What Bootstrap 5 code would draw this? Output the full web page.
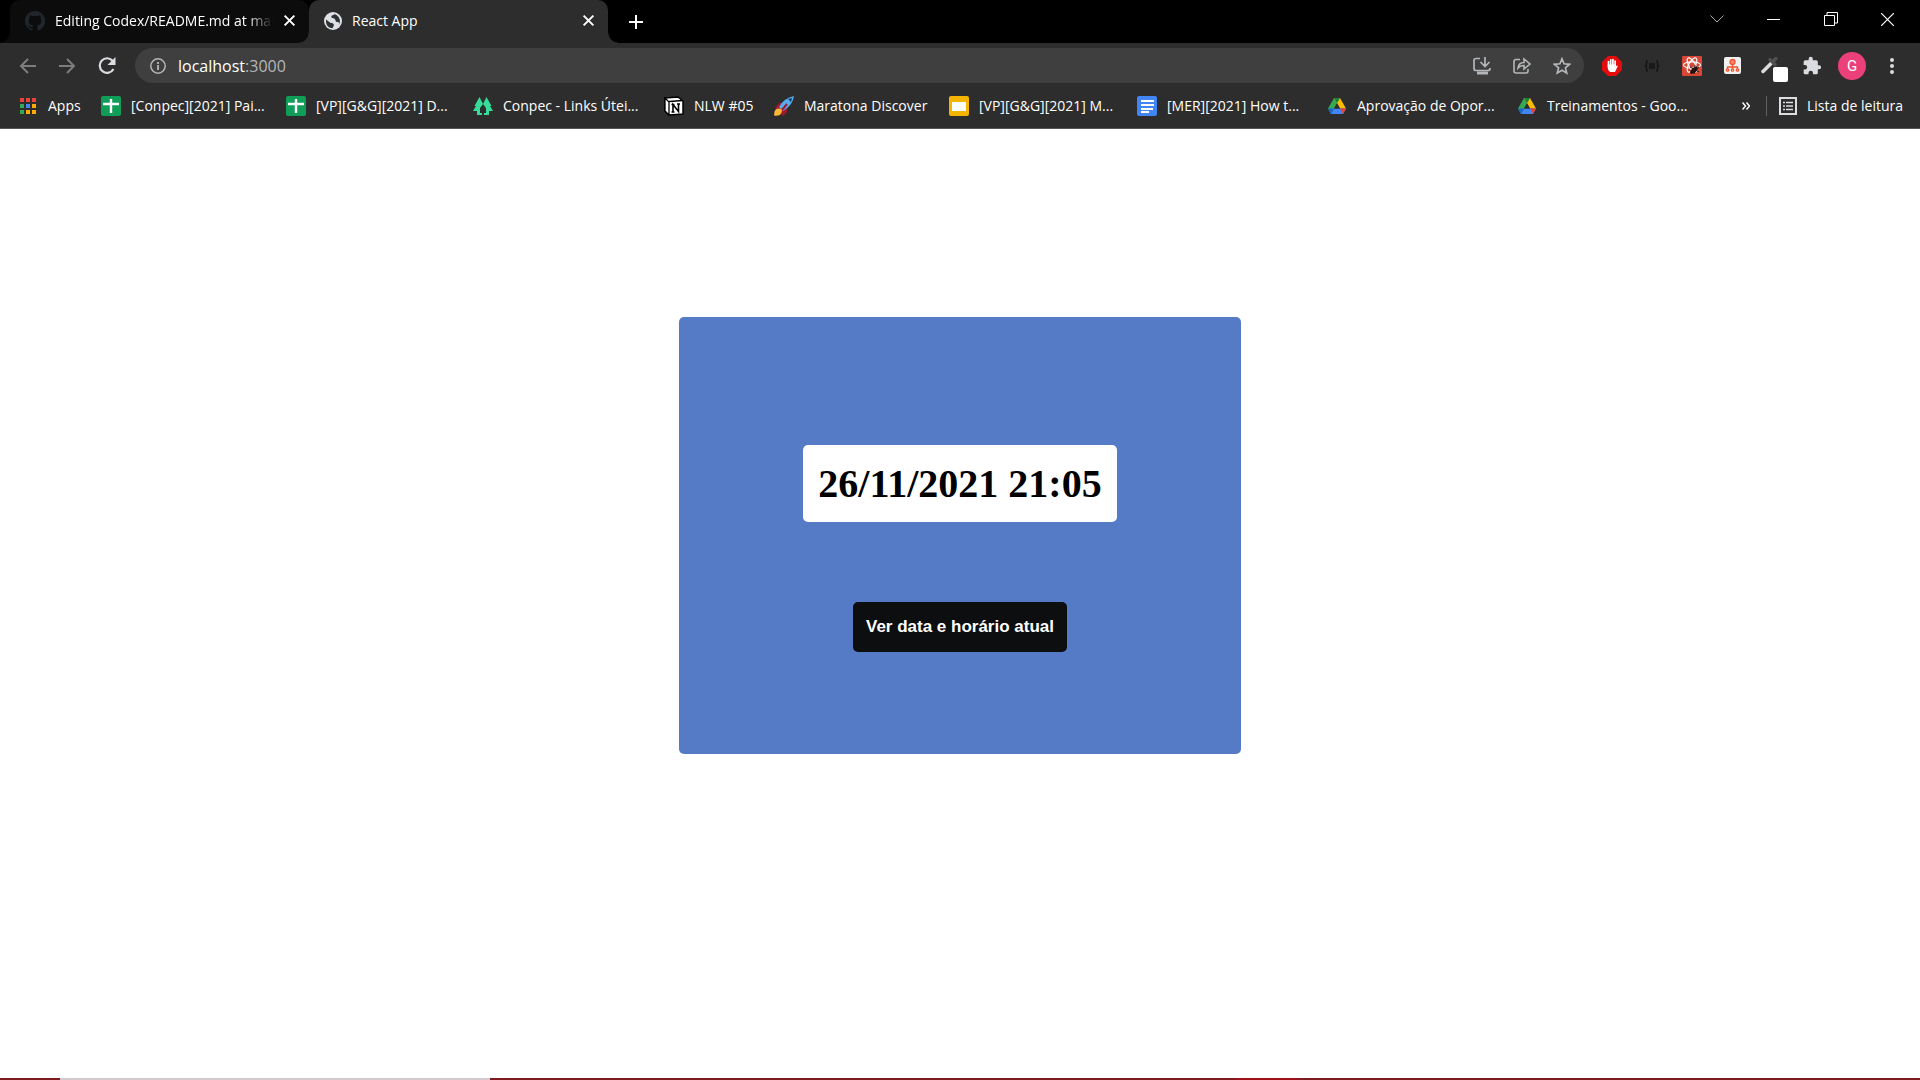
<!DOCTYPE html>
<html lang="pt-BR">
<head>
<meta charset="utf-8">
<meta name="viewport" content="width=device-width, initial-scale=1">
<title>React App</title>
<link href="https://cdn.jsdelivr.net/npm/bootstrap@5.3.0/dist/css/bootstrap.min.css" rel="stylesheet">
<style>
body{font-family:"Open Sans","Noto Sans",sans-serif;font-size:15px;line-height:20px;color:#fff;background:#fff}
button{color:inherit}
svg{display:block;flex:none}
.tabstrip{background:#000;height:43px;padding-left:10px}
.browser-tab{width:299px;height:43px;padding:0 13px 2px 15px;gap:10px;border-radius:10px 10px 0 0;position:relative}
.browser-tab.idle{background:#0c0c0c;border-radius:10px 10px 10px 0}
.browser-tab.current{background:#2d2d2d}
.browser-tab::before,.browser-tab.current::after{content:"";position:absolute;bottom:0;width:10px;height:10px}
.browser-tab::before{left:-10px}
.browser-tab.idle::before{background:radial-gradient(circle at 0 0,#000 9px,#0c0c0c 10px)}
.browser-tab.current::before{background:radial-gradient(circle at 0 0,#0c0c0c 9px,#2d2d2d 10px)}
.browser-tab.current::after{right:-10px;background:radial-gradient(circle at 100% 0,#000 9px,#2d2d2d 10px)}
.tab-title{font-size:14px;overflow:hidden;white-space:nowrap}
.fading{-webkit-mask-image:linear-gradient(90deg,#000 88%,transparent);mask-image:linear-gradient(90deg,#000 88%,transparent)}
.bare{background:none;border:0;padding:0;display:flex;align-items:center;justify-content:center;flex:none}
.win{width:57px;height:38px}
.toolbar-row{background:#2d2d2d;height:45px;padding:0 8px 0 7px}
.nav-ico{width:40px;height:36px;color:#dadce0}
.nav-ico:disabled{color:#7d7d7d}
.omnibox{background:#3f3f3f;border-radius:18px;height:35px;margin-left:8px;padding:0 2px 0 15px;color:#b4b7ba}
.addr{position:relative;font-size:16px;line-height:24px}
.addr input{position:absolute;inset:0;width:100%;border:0;background:none;color:transparent;padding:0}
.addr b{font-weight:400;color:#fff}
.ext{width:40px;height:36px}
.avatar{width:28px;height:28px;border-radius:50%;background:#ec407a;font:15px/28px Roboto,sans-serif}
.bookmark-row{background:#2d2d2d;height:41px;border-bottom:1px solid #555;padding:0 17px 4px 18px;font-size:14px}
.bookmark-row .vr{height:20px;align-self:center}
.marks{display:grid;grid-template-columns:83px 185px 187px 191px 110px 175px 188px 190px 190px auto}
.marks a,.reading{color:#fff;text-decoration:none;display:flex;align-items:center;gap:10px;white-space:nowrap}
.panel-blue{width:562px;height:437px;margin-top:188px;background:#557ac6;border-radius:5px;padding-top:128px}
.stamp{background:#fff;color:#000;border-radius:5px;font:bold 40px/45px "Liberation Serif",serif;padding:16px 15px;margin:0}
.now-btn{background:#0c0e10;color:#fff;border:0;border-radius:5px;margin-top:80px;padding:13px;font:bold 17px/24px "Liberation Sans",sans-serif}
.edge-strip{height:2px;background:linear-gradient(90deg,transparent 1236px,#a01018 1236px,#a01018 1297px,transparent 1297px),linear-gradient(90deg,#7c1c20 60px,#d2cace 60px,#d2cace 490px,#7c1c20 490px)}
</style>
<script src="https://cdn.jsdelivr.net/npm/bootstrap@5.3.0/dist/js/bootstrap.bundle.min.js"></script>
</head>
<body class="min-vh-100 d-flex flex-column">
<svg width="0" height="0" class="position-absolute" aria-hidden="true">
  <symbol id="x" viewBox="0 0 12 12"><path d="M1.500 1.500l9 9m0-9l-9 9" stroke="currentColor" stroke-width="1.800" fill="none"/></symbol>
  <symbol id="sheet" viewBox="0 0 20 20"><rect width="20" height="20" rx="2" fill="#0f9d58"/><path d="M10 3v14M2 8h16" stroke="#fff" stroke-width="2.400"/></symbol>
  <symbol id="drive" viewBox="0 0 20 20"><path d="M7 2h6L10 7.500 4 18 1 12.500z" fill="#34a853"/><path d="M7 2h6l6 10.500h-6z" fill="#fbbc04"/><path d="M7 2L10 7.300 13 2z" fill="#188038"/><path d="M7 12.500h12L16 18H4z" fill="#4285f4"/><path d="M1 12.500h6L4 18z" fill="#1967d2"/><path d="M13 12.500h6L16 18z" fill="#ea4335"/><path d="M10 7.300l3 5.200H7z" fill="#2d2d2d"/></symbol>
</svg>
<header>
  <div class="tabstrip d-flex align-items-center">
    <div class="browser-tab idle d-flex align-items-center">
      <svg width="20" height="20" viewBox="0 0 16 16" fill="#20262c"><path d="M8 0C3.580 0 0 3.580 0 8c0 3.540 2.290 6.530 5.470 7.590.4.070.55-.17.55-.38v-1.340c-2.230.48-2.700-1.070-2.700-1.070-.36-.93-.89-1.170-.89-1.170-.73-.5.05-.49.05-.49.81.06 1.230.83 1.230.83.72 1.230 1.880.87 2.340.67.07-.52.28-.87.51-1.070-1.780-.2-3.640-.89-3.640-3.950 0-.87.31-1.590.82-2.150-.08-.2-.36-1.020.08-2.120 0 0 .67-.21 2.200.82a7.600 7.600 0 0 1 4 0c1.530-1.040 2.200-.82 2.200-.82.44 1.100.16 1.920.08 2.120.51.56.82 1.270.82 2.150 0 3.070-1.870 3.750-3.650 3.950.29.25.54.73.54 1.480v2.190c0 .21.15.46.55.38A8 8 0 0 0 8 0z"/></svg>
      <span class="tab-title fading flex-grow-1">Editing Codex/README.md at main</span>
      <button class="bare" aria-label="Fechar guia"><svg width="13" height="13"><use href="#x"/></svg></button>
    </div>
    <div class="browser-tab current d-flex align-items-center">
      <svg width="18" height="18" viewBox="0 0 18 18"><circle cx="9" cy="9" r="9" fill="#dee1e6"/><path d="M2 7.500l4 3c1 .8 2.500.2 3.500 1.500S9.500 14 8.500 16.200C4 16 1.600 12.500 2 7.500zM10.500 2c-.2 1.500-3.500.8-3.200 2.800S10 6 11 7.300s.2 2.500 2.200 2.700 2.500 1 1.500 3.200C17 10 16.500 4.500 10.500 2z" fill="#303134"/></svg>
      <span class="tab-title flex-grow-1">React App</span>
      <button class="bare" aria-label="Fechar guia"><svg width="13" height="13"><use href="#x"/></svg></button>
    </div>
    <button class="bare ms-3 ps-1" aria-label="Nova guia"><svg width="16" height="16"><path d="M8 1v14M1 8h14" stroke="#fff" stroke-width="2"/></svg></button>
    <div class="ms-auto me-1 pe-0 d-flex align-self-start">
      <button class="bare win" aria-label="Pesquisar guias"><svg width="14" height="8"><path d="M.5.5L7 7 13.500.5" stroke="#aaa" fill="none"/></svg></button>
      <button class="bare win" aria-label="Minimizar"><svg width="13" height="13"><path d="M0 6.500h13" stroke="#fff"/></svg></button>
      <button class="bare win" aria-label="Restaurar"><svg width="14" height="14"><path d="M.5 3.500h10v10H.5zM3 3V.5h10.500V11H11" stroke="#fff" fill="none"/></svg></button>
      <button class="bare win" aria-label="Fechar"><svg width="13" height="13"><path d="M0 0l13 13M13 0L0 13" stroke="#fff" stroke-width="1.200"/></svg></button>
    </div>
  </div>
  <div class="toolbar-row d-flex align-items-center">
    <button class="bare nav-ico" disabled aria-label="Voltar"><svg width="17" height="16" fill="none" stroke="currentColor" stroke-width="2"><path d="M17 8H2M9 1L2 8l7 7"/></svg></button>
    <button class="bare nav-ico" disabled aria-label="Avançar"><svg width="17" height="16" fill="none" stroke="currentColor" stroke-width="2"><path d="M0 8h15M8 1l7 7-7 7"/></svg></button>
    <button class="bare nav-ico" aria-label="Recarregar"><svg width="18" height="18" fill="none"><path d="M14.800 4A7.300 7.300 0 1 0 15.500 12" stroke="currentColor" stroke-width="2.200"/><path d="M17.500 0v8h-8z" fill="currentColor"/></svg></button>
    <div class="omnibox d-flex align-items-center flex-grow-1">
      <svg width="16" height="16" fill="none" stroke="currentColor"><circle cx="8" cy="8" r="7.200" stroke-width="1.500"/><path d="M8 7v5M8 4v2" stroke-width="1.800"/></svg>
      <div class="addr flex-grow-1 ms-2 ps-1"><b>localhost</b>:3000<input type="text" aria-label="Endereço"></div>
      <button class="bare ext text-reset" aria-label="Instalar"><svg width="18" height="18" fill="none" stroke="currentColor" stroke-width="1.700"><path d="M7 1.500H3Q1 1.500 1 3.500v8q0 2 2 2h12q2 0 2-2V11M12 0v9M7.500 5L12 9.500 16.500 5"/><path d="M4 16h11" stroke-width="3"/></svg></button>
      <button class="bare ext text-reset" aria-label="Compartilhar"><svg width="18" height="18" fill="none" stroke="currentColor" stroke-width="1.600"><path d="M7 2.500H3q-2 0-2 2V14q0 2 2 2h10q2 0 2-2v-2M5 11c.5-4 2.500-5.500 6-5.500V2l6 5-6 5V8.500C8 8.500 6.500 9.200 5 11z"/></svg></button>
      <button class="bare ext text-reset" aria-label="Favoritar"><svg width="18" height="18" viewBox="0 0 18 18" fill="none" stroke="currentColor" stroke-width="1.700"><path d="M9 1.800l2.100 5 5.400.5-4.100 3.500 1.300 5.300L9 13.300l-4.700 2.800 1.300-5.300-4.100-3.500 5.400-.5z"/></svg></button>
    </div>
    <div class="d-flex align-items-center ms-2">
      <button class="bare ext" aria-label="Bloqueador de anúncios"><svg width="20" height="20" viewBox="0 0 20 20"><path d="M6 0h8l6 6v8l-6 6H6l-6-6V6z" fill="#e40d0d"/><path d="M6.500 10V5.500M8.700 9V3.800M10.900 9V3.500M13.100 10V5" stroke="#fff" stroke-width="1.700" stroke-linecap="round"/><path d="M5.700 8.500h8.200v2l1-1q1-.3.800.8L13 16H8Q5.700 14 5.700 12z" fill="#fff"/></svg></button>
      <button class="bare ext" aria-label="JSON"><svg width="16" height="12" viewBox="0 0 16 12" fill="none" stroke="#151515" stroke-width="1.500"><path d="M4 1Q2 1 2.500 3.500T.5 6q2.500 0 2 2.500T4 11M12 1q2 0 1.500 2.500t2 2.500q-2.500 0-2 2.500T12 11M5 4h6M5 6h6M5 8h6"/></svg></button>
      <button class="bare ext" aria-label="React"><svg width="20" height="20" viewBox="0 0 20 20"><rect width="20" height="20" rx="1" fill="#d84635"/><g fill="none" stroke="#fff" stroke-width="1.200"><ellipse cx="10" cy="9" rx="8.500" ry="3.200"/><ellipse cx="10" cy="9" rx="8" ry="3.200" transform="rotate(60 10 9)"/><ellipse cx="10" cy="9" rx="8" ry="3.200" transform="rotate(120 10 9)"/></g><path d="M8 15l3-3 4-2 1 3-3 4-4 1z" fill="#25110e"/><path d="M8 11l9 5M13 9l-1 9M17 11l-9 6" stroke="#25110e"/></svg></button>
      <button class="bare ext" aria-label="Mapa"><svg width="17" height="17" viewBox="0 0 17 17"><rect width="17" height="17" rx="2" fill="#f1f1f1"/><g fill="none" stroke="#ef5430" stroke-width="1.300"><circle cx="8.500" cy="5" r="2.500" fill="#f58b70"/><path d="M8.500 7v5M3.500 12v-2h10v2"/><circle cx="3.500" cy="13" r="1.200"/><circle cx="8.500" cy="13" r="1.200"/><circle cx="13.500" cy="13" r="1.200"/></g></svg></button>
      <button class="bare ext" aria-label="Conta-gotas"><svg width="32" height="32" viewBox="0 0 32 32"><path d="M7 21.500l8-8" stroke="#dcdcdc" stroke-width="3.500" stroke-linecap="round"/><path d="M14 9.500l5 5M17 11.500l3-3" stroke="#505050" stroke-width="3.500" stroke-linecap="round"/><rect x="17" y="17" width="15" height="15" rx="2" fill="#fff"/></svg></button>
      <button class="bare ext" aria-label="Extensões"><svg width="20" height="20" viewBox="0 0 24 24" fill="#dadce0"><path d="M20.500 11H19V7c0-1.100-.9-2-2-2h-4V3.500a2.500 2.500 0 0 0-5 0V5H4c-1.100 0-2 .9-2 2v3.800h1.500a2.700 2.700 0 0 1 0 5.400H2V20c0 1.100.9 2 2 2h3.800v-1.500a2.700 2.700 0 0 1 5.400 0V22H17c1.100 0 2-.9 2-2v-4h1.500a2.500 2.500 0 0 0 0-5z"/></svg></button>
      <button class="bare ext" aria-label="Perfil"><span class="avatar">G</span></button>
      <button class="bare ext" aria-label="Menu"><svg width="4" height="16" fill="#dadce0"><circle cx="2" cy="2" r="2"/><circle cx="2" cy="8" r="2"/><circle cx="2" cy="14" r="2"/></svg></button>
    </div>
  </div>
  <div class="bookmark-row d-flex align-items-center">
    <nav class="marks" aria-label="Favoritos">
      <a href="#"><svg width="20" height="18" viewBox="0 0 20 18"><path d="M2 1h4v4H2zM8 1h4v4H8zM14 1h4v4h-4z" fill="#ea4335"/><path d="M2 7h4v4H2zM2 13h4v4H2z" fill="#34a853"/><path d="M8 7h4v4H8z" fill="#4285f4"/><path d="M14 7h4v4h-4zM8 13h4v4H8zM14 13h4v4h-4z" fill="#fbab04"/></svg>Apps</a>
      <a href="#"><svg width="20" height="20"><use href="#sheet"/></svg>[Conpec][2021] Pai...</a>
      <a href="#"><svg width="20" height="20"><use href="#sheet"/></svg>[VP][G&amp;G][2021] D...</a>
      <a href="#"><svg width="20" height="20" viewBox="0 0 20 20" fill="#36dc99"><path d="M6.500 1L10 8l-3 4v5h2v2H4v-4H0l3-5H1.500zM13.500 1L10 8l3 4v5h-2v2h5v-4h4l-3-5h1.500z"/></svg>Conpec - Links Útei...</a>
      <a href="#"><svg width="20" height="20" viewBox="0 0 20 20"><path d="M1 2l13-1 5 4v13l-14 1-4-4z" fill="#fff" stroke="#000" stroke-width="1.500"/><path d="M1 2l4 4v13l-4-4zM5 5.500l14-1" fill="#fff" stroke="#000" stroke-width="1.300"/><path d="M9 16V8.500l5.500 7V8M7.500 8.500h3M7.500 16h3M13 8h3" stroke="#000" stroke-width="1.600" fill="none"/></svg>NLW #05</a>
      <a href="#"><svg width="20" height="20" viewBox="0 0 20 20"><path d="M1 12l4-5h5l3 4v5l-4 4z" fill="#a0182c"/><path d="M20 0q-1 9-11 15l-4-4Q10 2 20 0z" fill="#55acee"/><path d="M14 3l3 3 1-4z" fill="#183b63"/><path d="M8 14L13 8" stroke="#a0182c" stroke-width="2"/><path d="M0 19.500q0-7 4.500-7t3 4T0 19.500z" fill="#ffb636"/></svg>Maratona Discover</a>
      <a href="#"><svg width="20" height="20"><rect width="20" height="20" rx="2" fill="#f4b400"/><path d="M3 6h14v9H3z" fill="#fff"/></svg>[VP][G&amp;G][2021] M...</a>
      <a href="#"><svg width="20" height="20"><rect width="20" height="20" rx="2" fill="#4285f4"/><path d="M4 5h13M4 9h13M4 13h12M4 16h8" stroke="#fff" stroke-width="2"/></svg>[MER][2021] How t...</a>
      <a href="#"><svg width="20" height="20"><use href="#drive"/></svg>Aprovação de Opor...</a>
      <a href="#"><svg width="20" height="20"><use href="#drive"/></svg>Treinamentos - Goo...</a>
    </nav>
    <button class="bare ms-auto" aria-label="Mais favoritos"><svg width="8" height="8" fill="none" stroke="#fff" stroke-width="1.500"><path d="M.5.5L3.500 4l-3 3.500M4.500.5L7.500 4l-3 3.500"/></svg></button>
    <span class="vr ms-3 me-2"></span>
    <button class="bare reading ms-1" aria-label="Lista de leitura"><svg width="18" height="18"><path d="M1 1h16v16H1z" fill="none" stroke="#dadce0" stroke-width="2"/><path d="M4 5.500h2M4 9h2M4 12.500h2M7 5.500h7M7 9h7M7 12.500h7" stroke="#dadce0" stroke-width="1.500"/></svg>Lista de leitura</button>
  </div>
</header>
<main class="flex-grow-1 d-flex justify-content-center align-items-start">
  <section class="panel-blue d-flex flex-column align-items-center">
    <h1 class="stamp">26/11/2021 21:05</h1>
    <button class="now-btn">Ver data e horário atual</button>
  </section>
</main>
<footer class="edge-strip"></footer>
</body>
</html>
